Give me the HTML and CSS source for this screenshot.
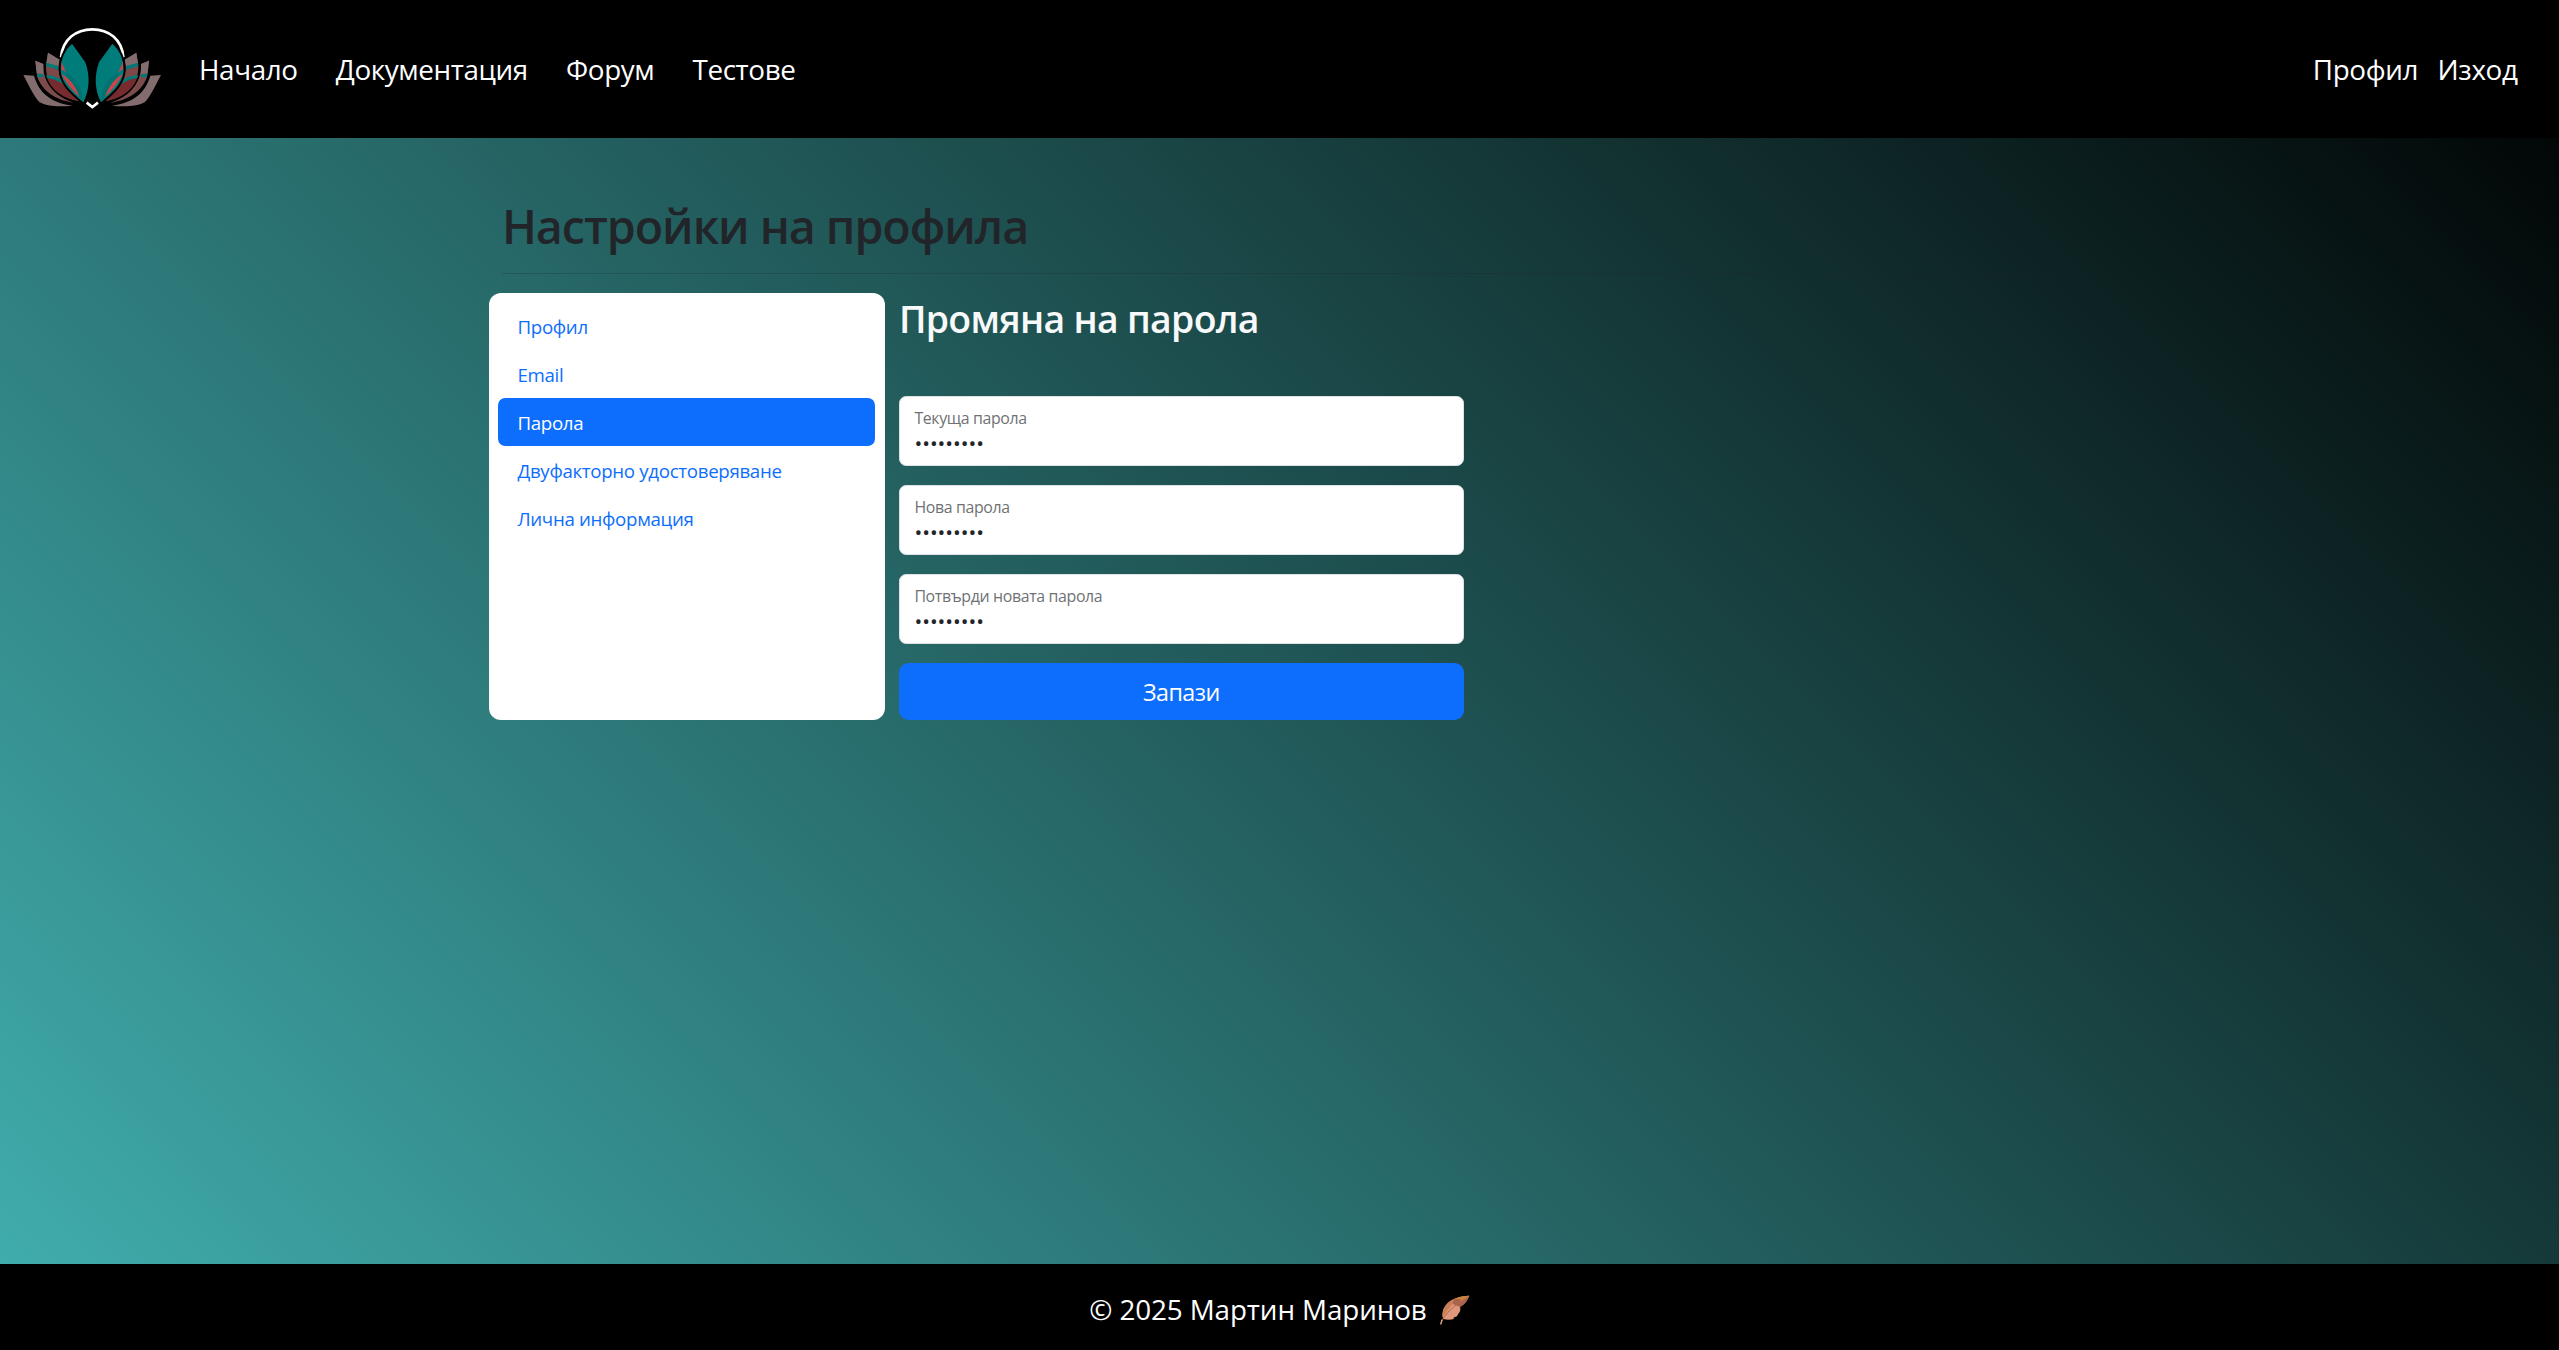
FILE: index.html
```html
<!DOCTYPE html>
<html lang="bg">
<head>
<meta charset="utf-8">
<title>Промяна на парола</title>
<link rel="stylesheet" href="styles.css">
</head>
<body>
<header class="navbar">
  <a class="brand" href="#">
    <svg class="logo" viewBox="60 81 432 252" aria-hidden="true">
      <path d="M183 172C188 118 228 88 277 88s89 30 93 84" fill="none" stroke="#fff" stroke-width="8"/>
      <path d="M260 308l17 13 17-13" fill="none" stroke="#fff" stroke-width="8"/>
      <g id="wing">
        <path d="M70 225L102 227C116 276 150 308 217 317C180 321 140 320 118 306C100 288 86 254 70 225Z" fill="#826c6e"/>
        <path class="petal" d="M106 182L130 192C128 240 156 288 222 308C172 302 128 276 112 231Z" fill="#7c4c4c"/>
        <path d="M106 182L130 192V222L110 220Z" fill="#826c6e"/>
        <path d="M110 221L130 223V232L113 231Z" fill="#007a78"/>
        <path class="petal" d="M144 158L179 179C168 225 190 266 238 304C180 292 136 252 138 198Z" fill="#7c4848"/>
        <path d="M144 158L179 179L174 199L139 189Z" fill="#826c6e"/>
        <path d="M139 188L174 198V209L138 198Z" fill="#007a78"/>
        <path d="M139 226Q172 232 188 247L240 304C190 296 151 272 139 226Z" fill="#762c2e"/>
        <path d="M139 225Q162 226 182 238L192 254Q166 236 141 234Z" fill="#007a78"/>
        <path class="petal" d="M216 131L256 187C271 228 269 272 250 307C220 280 182 252 182 207Q183 160 216 131Z" fill="#007d7b"/>
        <path d="M194 216C234 238 244 260 250 306Q240 292 232 286Z" fill="#007270"/>
        <path d="M184 185L198 217L184 208ZM184 221Q222 242 239 292Q200 254 184 221Z" fill="#c9454c"/>
      </g>
      <use href="#wing" transform="matrix(-1 0 0 1 553 0)"/>
    </svg>
  </a>
  <nav class="nav-main">
    <a class="nav-link" href="#">Начало</a>
    <a class="nav-link" href="#">Документация</a>
    <a class="nav-link" href="#">Форум</a>
    <a class="nav-link" href="#">Тестове</a>
  </nav>
  <nav class="nav-user">
    <a class="nav-link" href="#">Профил</a>
    <a class="nav-link" href="#">Изход</a>
  </nav>
</header>
<main class="container">
  <h1 class="page-title">Настройки на профила</h1>
  <hr class="divider">
  <div class="row">
    <aside class="side">
      <a class="side-link" href="#">Профил</a>
      <a class="side-link" href="#">Email</a>
      <a class="side-link active" href="#">Парола</a>
      <a class="side-link" href="#">Двуфакторно удостоверяване</a>
      <a class="side-link" href="#">Лична информация</a>
    </aside>
    <form class="form">
      <h2 class="form-title">Промяна на парола</h2>
      <div class="field"><span class="label">Текуща парола</span><span class="dots">•••••••••</span></div>
      <div class="field"><span class="label">Нова парола</span><span class="dots">•••••••••</span></div>
      <div class="field"><span class="label">Потвърди новата парола</span><span class="dots">•••••••••</span></div>
      <button class="submit" type="button">Запази</button>
    </form>
  </div>
</main>
<footer class="footer">
  <span class="copy">© 2025 Мартин Маринов</span>
  <svg class="feather" viewBox="0 0 90 90" aria-hidden="true">
    <path d="M8 66C2 34 34 4 88 2C82 16 74 28 60 36Q64 48 54 58Q52 66 40 68L42 72Q26 76 10 72Z" fill="#e0987c"/>
    <path d="M42 12Q62 3 88 2C82 18 74 28 60 36L36 26Z" fill="#a96450"/>
    <path d="M8 66C6 40 22 18 42 12L38 26Z" fill="#c98058"/>
    <path d="M42 12Q62 2 88 2L64 20L60 12Z" fill="#c98440"/>
    <path d="M2 88Q10 54 70 14" fill="none" stroke="#b5653f" stroke-width="3"/>
    <path d="M2 88L6 74" fill="none" stroke="#d9a080" stroke-width="4"/>
  </svg>
</footer>
</body>
</html>
```
FILE: styles.css
```css
* { box-sizing: border-box; }
body {
  margin: 0;
  min-height: 1350px;
  display: flex;
  flex-direction: column;
  font-family: "Open Sans", "Noto Sans", sans-serif;
  font-size: 19.2px;
  line-height: 1.5;
  color: #212529;
  background: linear-gradient(45deg, #42b0b0, #000);
}
a { text-decoration: none; }
.navbar {
  height: 138px;
  display: flex;
  align-items: center;
  padding: 0 41.5px 0 20px;
  background: #000;
}
.brand { display: flex; }
.logo { width: 144px; height: 84px; }
.petal { stroke: #000; stroke-width: 12px; paint-order: stroke; }
.nav-main, .nav-user { display: flex; padding-top: 2px; }
.nav-main { margin-left: 35px; gap: 38.2px; }
.nav-user { margin-left: auto; gap: 19.6px; }
.nav-link { color: #fff; font-size: 27.8px; letter-spacing: -0.38px; }
.container { width: 1584px; margin: 0 auto; padding: 59px 14.4px 0; flex: 1; }
.page-title { margin: 0; font-size: 46.6px; font-weight: 600; line-height: 58px; letter-spacing: -1.05px; }
.divider { margin: 18px 0 19px; border: 0; border-top: 1px solid #212529; opacity: .25; }
.row { display: flex; gap: 14px; margin-left: -13px; }
.side {
  width: 396px; height: 427px; padding: 9px 10px 10px 9px; border-radius: 12px; background: #fff;
}
.side-link {
  display: block; height: 48px; line-height: 49px; padding: 0 19.6px; border-radius: 7.2px;
  color: #0d6efd; font-size: 18.7px; letter-spacing: -0.32px;
}
.side-link.active { background: #0d6efd; color: #fff; }
.form { width: 565px; display: flex; flex-direction: column; }
.form-title { margin: 0 0 54px; padding-top: 3px; font-size: 37.4px; font-weight: 600; line-height: 46px; letter-spacing: -0.7px; color: #f8f9fa; }
.field {
  height: 70px; margin-bottom: 19px; padding: 10px 14.5px 0; border: 1px solid #dee2e6; border-radius: 7.2px; background: #fff;
  display: flex; flex-direction: column;
}
.label { font-size: 15.9px; line-height: 22px; letter-spacing: -0.35px; color: #6f7275; }
.dots { font-size: 20.6px; line-height: 28px; }
.submit {
  height: 57px; border: 0; border-radius: 9.6px; background: #0d6efd; color: #fff;
  font: 23.3px "Open Sans", "Noto Sans", sans-serif; letter-spacing: -0.5px;
}
.footer {
  height: 86px; padding-top: 6px; display: flex; align-items: center; justify-content: center; gap: 13px;
  background: #000; color: #fff; font-size: 27.8px;
}
.copy { letter-spacing: -0.1px; }
.feather { width: 30px; height: 30px; }
```
